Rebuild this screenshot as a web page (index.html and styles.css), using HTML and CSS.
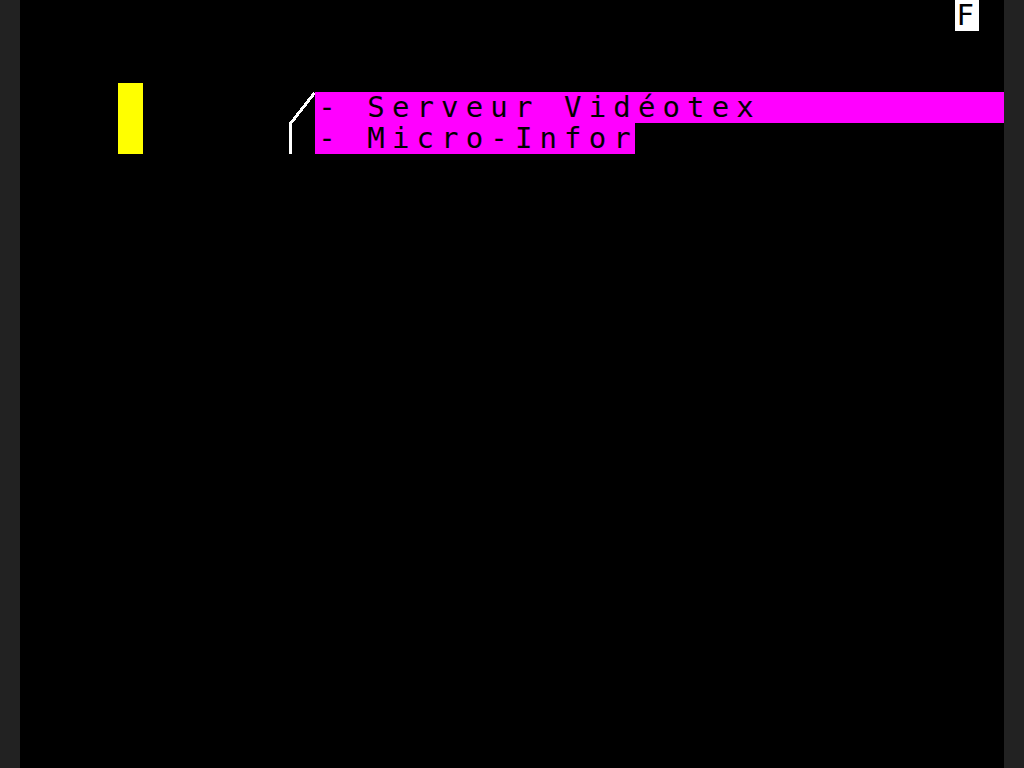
FILE: index.html
```html
<!DOCTYPE html>
<html lang="fr">
<head>
<meta charset="utf-8">
<title>Minitel</title>
<link rel="stylesheet" href="styles.css">
</head>
<body>
<div class="screen">
  <div class="cell status">F</div>
  <div class="block-yellow"></div>
  <svg class="line-art" width="25" height="62" viewBox="0 0 25 62">
    <polyline points="-0.5,62 -0.5,31.5 23.5,1" fill="none" stroke="#fff" stroke-width="3" shape-rendering="crispEdges"/>
  </svg>
  <div class="row row-a">- Serveur Vidéotex</div>
  <div class="row row-b">- Micro-Infor</div>
</div>
</body>
</html>
```
FILE: styles.css
```css
html, body {
  margin: 0;
  padding: 0;
  background: #222222;
}
body {
  width: 1024px;
  height: 768px;
  overflow: hidden;
}
.screen {
  margin: 0 20px;
  width: 984px;
  height: 768px;
  background: #000;
  display: grid;
  grid-template-columns: repeat(40, 24.6px);
  grid-template-rows: repeat(25, 30.72px);
  font-family: "DejaVu Sans Mono", monospace;
  font-size: 29px;
  line-height: 30.72px;
  letter-spacing: 7.14px;
  white-space: pre;
}
.status {
  grid-column: 39;
  grid-row: 1;
  background: #fff;
  color: #000;
  padding-left: 2px;
}
.block-yellow {
  grid-column: 5;
  grid-row: 3 / 6;
  align-self: end;
  height: 71px;
  background: #ffff00;
}
.line-art {
  grid-column: 12;
  grid-row: 4 / 6;
  overflow: visible;
  display: block;
}
.row {
  background: #ff00ff;
  color: #000;
  padding-left: 3px;
}
.row-a {
  grid-column: 13 / 41;
  grid-row: 4;
}
.row-b {
  grid-column: 13 / 26;
  grid-row: 5;
}
```
